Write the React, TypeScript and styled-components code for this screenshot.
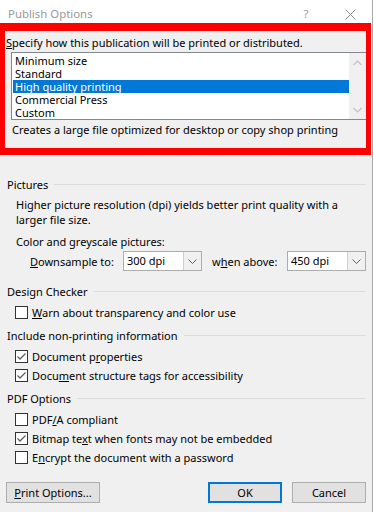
import styled, { createGlobalStyle } from 'styled-components'

const GlobalStyle = createGlobalStyle`
  html, body {
    margin: 0;
    background: #ffffff;
  }
`

const Dialog = styled.div`
  width: 373px;
  height: 512px;
  box-sizing: border-box;
  background: #f0f0f0;
  border-right: 1px solid #a9a9a9;
  font-family: 'Noto Sans', 'Open Sans', sans-serif;
  font-size: 11px;
  line-height: 15px;
  color: #000;
  white-space: nowrap;
  overflow: hidden;
`

const TitleBar = styled.div`
  height: 23px;
  box-sizing: border-box;
  background: #ffffff;
  display: flex;
  align-items: flex-start;
  padding: 6px 0 0 8px;
  color: #999999;
  font-size: 11.4px;
`

const Title = styled.div`
  flex: 1;
`

const TitleButton = styled.div`
  width: 44px;
  display: flex;
  justify-content: center;
  color: #9a9a9a;
`

const Highlight = styled.section`
  width: 371px;
  box-sizing: border-box;
  border-style: solid;
  border-color: #ff0000;
  border-width: 8px 5px 7px 5px;
  padding: 4px 0 11px 1px;
`

const ListBox = styled.div`
  margin: 2px 0 0 5px;
  height: 68px;
  box-sizing: border-box;
  background: #ffffff;
  border: 1px solid #828790;
  border-right: none;
  display: grid;
  grid-template-columns: 1fr 17px;
`

const Items = styled.div`
  padding: 1px 0 0 1px;
`

const Item = styled.div<{ $selected?: boolean }>`
  height: 13px;
  line-height: 13px;
  padding-left: 2px;
  overflow: hidden;
  background: ${(p) => (p.$selected ? '#0078d7' : 'transparent')};
  color: ${(p) => (p.$selected ? '#ffffff' : '#000000')};
`

const ScrollTrack = styled.div`
  background: #f0f0f0;
  display: flex;
  flex-direction: column;
  justify-content: space-between;
  align-items: center;
  padding: 7px 0 6px;
`

const Note = styled.div`
  margin: 2px 0 0 6px;
`

const Body = styled.div`
  padding: 0 6px 0 7px;
`

const Header = styled.div<{ $top: number }>`
  margin-top: ${(p) => p.$top}px;
  display: flex;
  align-items: center;
  gap: 6px;

  &::after {
    content: '';
    flex: 1;
    height: 1px;
    background: #dcdcdc;
  }
`

const Para = styled.p<{ $top: number; $indent?: number }>`
  margin: ${(p) => p.$top}px 0 0 ${(p) => p.$indent ?? 9}px;
`

const ComboRow = styled.div`
  margin: 2px 0 0 23px;
  display: flex;
  align-items: center;
`

const ComboLabel = styled.span<{ $width: number; $pad?: number }>`
  width: ${(p) => p.$width}px;
  box-sizing: border-box;
  padding-left: ${(p) => p.$pad ?? 0}px;
`

const Combo = styled.div`
  width: 79px;
  height: 20px;
  box-sizing: border-box;
  border: 1px solid #acacac;
  background: #ffffff;
  display: flex;
`

const ComboValue = styled.span`
  flex: 1;
  padding-left: 3px;
  line-height: 18px;
`

const ComboArrow = styled.span`
  width: 17px;
  background: #f0f0f0;
  border-left: 1px solid #cfcfcf;
  display: flex;
  align-items: center;
  justify-content: center;
`

const Check = styled.div<{ $top: number }>`
  margin: ${(p) => p.$top}px 0 0 8px;
  display: flex;
  align-items: center;
  gap: 4px;
`

const Box = styled.span`
  width: 13px;
  height: 13px;
  box-sizing: border-box;
  border: 1px solid #333333;
  background: #ffffff;
  display: flex;
`

const Buttons = styled.div`
  margin: 17px 0 0 -1px;
  display: flex;
  gap: 10px;
`

const Button = styled.button<{ $width: number; $default?: boolean }>`
  width: ${(p) => p.$width}px;
  height: 21px;
  box-sizing: border-box;
  padding: 0;
  font: inherit;
  color: #000;
  background: #e1e1e1;
  border: ${(p) => (p.$default ? '2px solid #0078d7' : '1px solid #adadad')};

  &:first-child {
    margin-right: auto;
  }
`

function Chevron({ up }: { up?: boolean }) {
  return (
    <svg width="9" height="6" viewBox="0 0 9 6">
      <polyline
        points={up ? '0.5,5 4.5,1 8.5,5' : '0.5,1 4.5,5 8.5,1'}
        fill="none"
        stroke="#c2c2c2"
        strokeWidth="1.2"
      />
    </svg>
  )
}

function DropArrow() {
  return (
    <svg width="9" height="5" viewBox="0 0 9 5">
      <polyline points="0.5,0.5 4.5,4.5 8.5,0.5" fill="none" stroke="#606060" strokeWidth="1" />
    </svg>
  )
}

function CheckBox({ checked }: { checked?: boolean }) {
  return (
    <Box>
      {checked && (
        <svg width="11" height="11" viewBox="0 0 11 11">
          <polyline points="1.5,5.5 4,8 9.5,2.5" fill="none" stroke="#5f5f5f" strokeWidth="1.3" />
        </svg>
      )}
    </Box>
  )
}

export default function App() {
  return (
    <Dialog>
      <GlobalStyle />
      <TitleBar>
        <Title>Publish Options</Title>
        <TitleButton>?</TitleButton>
        <TitleButton>
          <svg width="11" height="11" viewBox="0 0 11 11" style={{ marginTop: 3 }}>
            <path d="M0.5 0.5 L10.5 10.5 M10.5 0.5 L0.5 10.5" stroke="#8c8c8c" strokeWidth="1" />
          </svg>
        </TitleButton>
      </TitleBar>

      <Highlight>
        <div>
          <u>S</u>pecify how this publication will be printed or distributed.
        </div>
        <ListBox>
          <Items>
            <Item>Minimum size</Item>
            <Item>Standard</Item>
            <Item $selected>High quality printing</Item>
            <Item>Commercial Press</Item>
            <Item>Custom</Item>
          </Items>
          <ScrollTrack>
            <Chevron up />
            <Chevron />
          </ScrollTrack>
        </ListBox>
        <Note>Creates a large file optimized for desktop or copy shop printing</Note>
      </Highlight>

      <Body>
        <Header $top={22}>Pictures</Header>
        <Para $top={5}>
          Higher picture resolution (dpi) yields better print quality with a
          <br />
          larger file size.
        </Para>
        <Para $top={7}>Color and greyscale pictures:</Para>
        <ComboRow>
          <ComboLabel $width={93}>
            <u>D</u>ownsample to:
          </ComboLabel>
          <Combo>
            <ComboValue>300 dpi</ComboValue>
            <ComboArrow>
              <DropArrow />
            </ComboArrow>
          </Combo>
          <ComboLabel $width={85} $pad={10}>
            w<u>h</u>en above:
          </ComboLabel>
          <Combo>
            <ComboValue>450 dpi</ComboValue>
            <ComboArrow>
              <DropArrow />
            </ComboArrow>
          </Combo>
        </ComboRow>

        <Header $top={13}>Design Checker</Header>
        <Check $top={6}>
          <CheckBox />
          <span>
            <u>W</u>arn about transparency and color use
          </span>
        </Check>

        <Header $top={8}>Include non-printing information</Header>
        <Check $top={6}>
          <CheckBox checked />
          <span>
            Document p<u>r</u>operties
          </span>
        </Check>
        <Check $top={4}>
          <CheckBox checked />
          <span>
            Docu<u>m</u>ent structure tags for accessibility
          </span>
        </Check>

        <Header $top={8}>PDF Options</Header>
        <Check $top={6}>
          <CheckBox />
          <span>
            PDF<u>/</u>A compliant
          </span>
        </Check>
        <Check $top={4}>
          <CheckBox checked />
          <span>
            Bitmap te<u>x</u>t when fonts may not be embedded
          </span>
        </Check>
        <Check $top={4}>
          <CheckBox />
          <span>
            E<u>n</u>crypt the document with a password
          </span>
        </Check>

        <Buttons>
          <Button $width={94}>
            <u>P</u>rint Options...
          </Button>
          <Button $width={74} $default>
            OK
          </Button>
          <Button $width={74}>Cancel</Button>
        </Buttons>
      </Body>
    </Dialog>
  )
}
